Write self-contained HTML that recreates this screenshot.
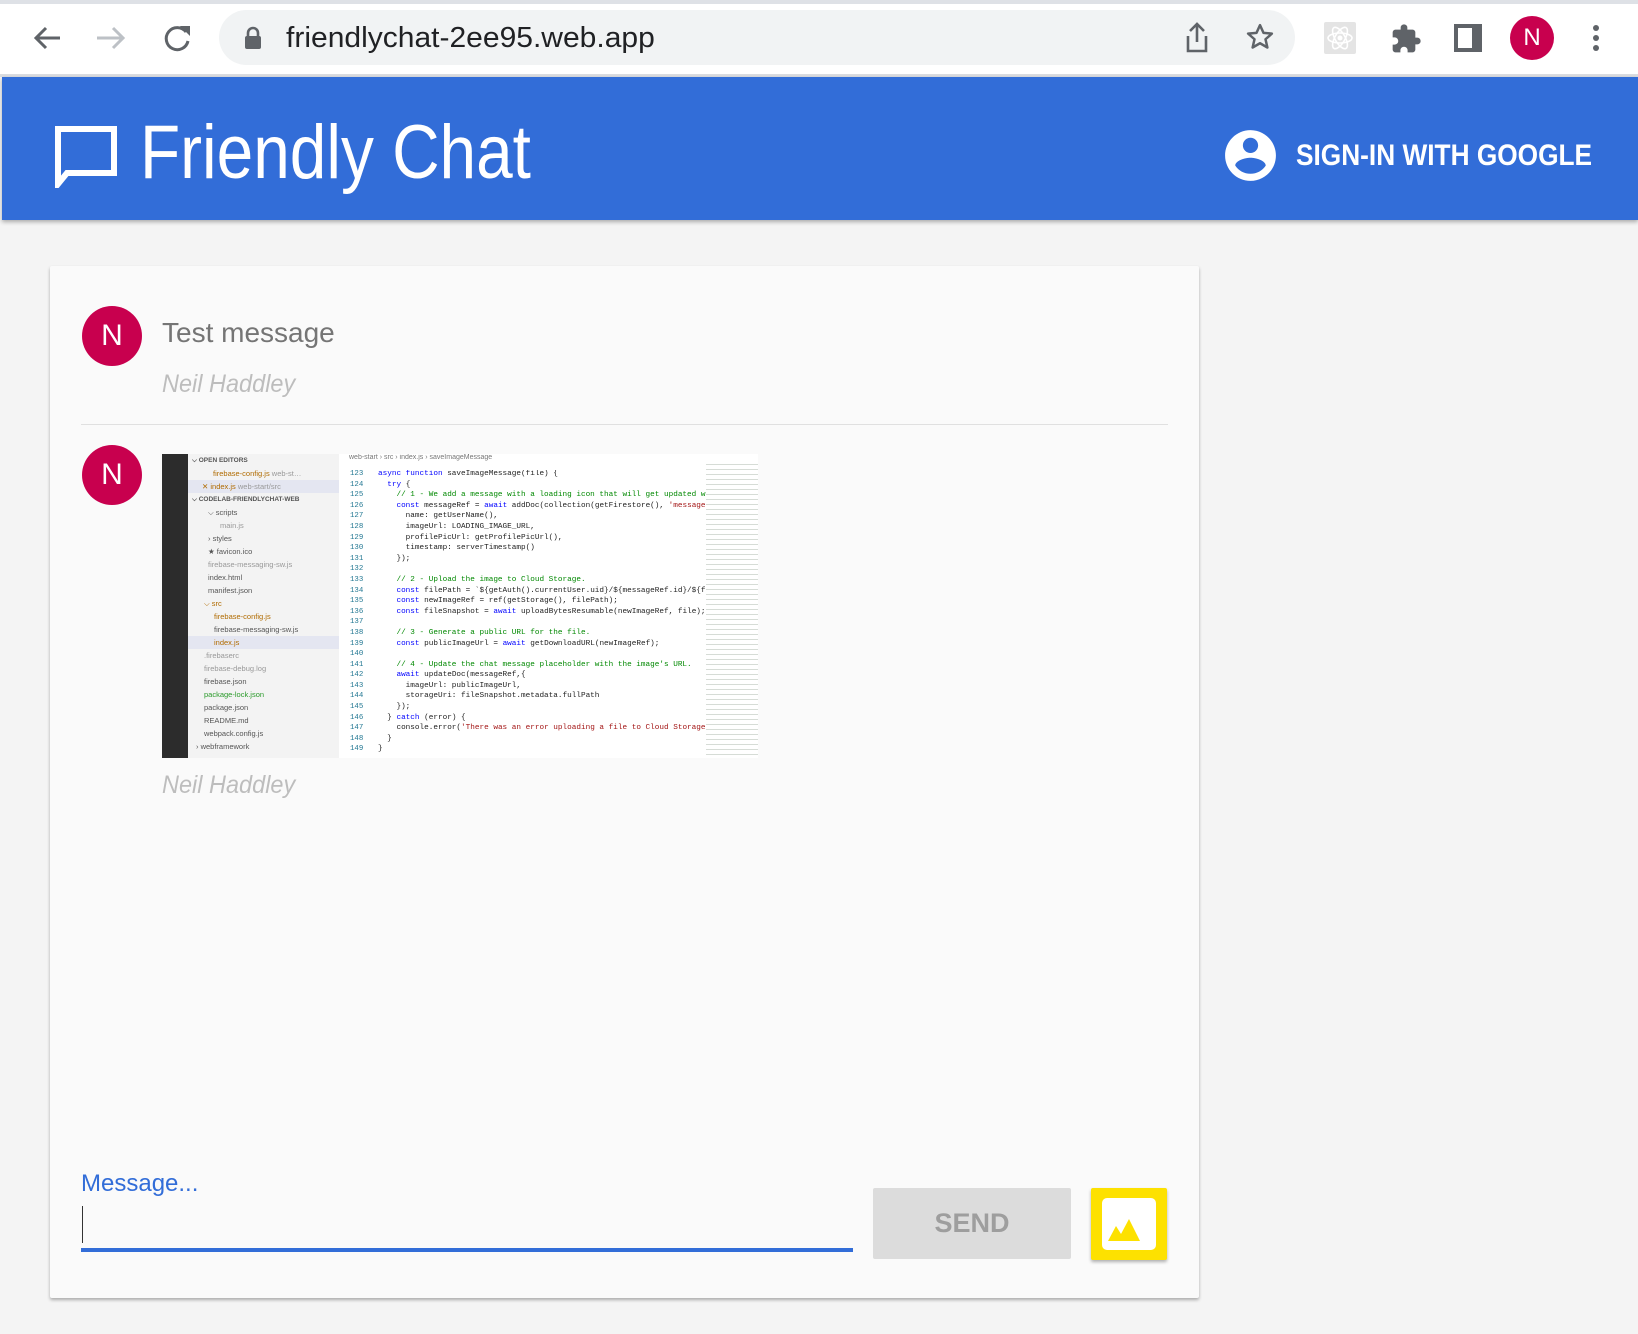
<!DOCTYPE html>
<html><head><meta charset="utf-8">
<style>
*{margin:0;padding:0;box-sizing:border-box}
body{width:1638px;height:1334px;background:#f4f4f4;font-family:"Liberation Sans",sans-serif;position:relative;overflow:hidden}
.abs{position:absolute}
.mono{font-family:"Liberation Mono",monospace}
</style></head><body>
<!-- browser chrome -->
<div class="abs" style="left:0;top:0;width:1638px;height:4px;background:#dee1e6"></div>
<div class="abs" style="left:0;top:4px;width:1638px;height:70px;background:#fff"></div>
<div class="abs" style="left:0;top:74px;width:1638px;height:3px;background:#dadce0"></div>
<svg class="abs" style="left:30px;top:22px" width="170" height="32" viewBox="0 0 170 32">
 <path d="M30 16H6M16 6L6 16l10 10" stroke="#5f6368" stroke-width="3" fill="none"/>
 <path d="M67 16h26M83 6l10 10-10 10" stroke="#bdc1c6" stroke-width="3" fill="none"/>
 <path d="M156 10a11 11 0 1 0 2 9" stroke="#5f6368" stroke-width="3" fill="none"/>
 <path d="M150 4h10v10z" fill="#5f6368"/>
</svg>
<div class="abs" style="left:219px;top:10px;width:1076px;height:55px;border-radius:28px;background:#f1f3f4"></div>
<svg class="abs" style="left:244px;top:26px" width="18" height="24" viewBox="0 0 18 24"><path d="M4 11V7a5 5 0 0 1 10 0v4" stroke="#5f6368" stroke-width="2.6" fill="none"/><rect x="1" y="10" width="16" height="13" rx="2" fill="#5f6368"/></svg>
<div class="abs" style="left:286px;top:22px;font-size:29px;color:#202124;transform:scaleX(1.035);transform-origin:0 0">friendlychat-2ee95.web.app</div>
<svg class="abs" style="left:1184px;top:22px" width="26" height="32" viewBox="0 0 26 32"><path d="M13 20V3M6 9l7-7 7 7M4 14v15h18V14" stroke="#5f6368" stroke-width="2.6" fill="none"/></svg>
<svg class="abs" style="left:1245px;top:22px" width="30" height="30" viewBox="0 0 24 24"><path d="M12 2.5l2.8 6.2 6.7.6-5.1 4.5 1.5 6.6L12 17l-5.9 3.4 1.5-6.6-5.1-4.5 6.7-.6z" stroke="#5f6368" stroke-width="2" fill="none" stroke-linejoin="round"/></svg>
<div class="abs" style="left:1324px;top:22px;width:32px;height:32px;background:#e4e4e4;border-radius:2px"></div>
<svg class="abs" style="left:1324px;top:22px" width="32" height="32" viewBox="0 0 32 32"><g stroke="#fff" stroke-width="1.6" fill="none"><ellipse cx="16" cy="16" rx="12" ry="5"/><ellipse cx="16" cy="16" rx="12" ry="5" transform="rotate(60 16 16)"/><ellipse cx="16" cy="16" rx="12" ry="5" transform="rotate(-60 16 16)"/></g><circle cx="16" cy="16" r="2.5" fill="#fff"/></svg>
<svg class="abs" style="left:1390px;top:23px" width="32" height="32" viewBox="0 0 24 24"><path d="M20.5 11H19V7a2 2 0 0 0-2-2h-4V3.5a2.5 2.5 0 0 0-5 0V5H4a2 2 0 0 0-2 2v3.8h1.5a2.7 2.7 0 0 1 0 5.4H2V20a2 2 0 0 0 2 2h3.8v-1.5a2.7 2.7 0 0 1 5.4 0V22H17a2 2 0 0 0 2-2v-4h1.5a2.5 2.5 0 0 0 0-5z" fill="#5f6368"/></svg>
<div class="abs" style="left:1454px;top:24px;width:28px;height:28px;border:4px solid #5f6368;border-right-width:10px"></div>
<div class="abs" style="left:1510px;top:16px;width:44px;height:44px;border-radius:50%;background:#c8004e;color:#fff;font-size:24px;text-align:center;line-height:44px">N</div>
<div class="abs" style="left:1593px;top:25px;width:6px;height:6px;border-radius:50%;background:#5f6368;box-shadow:0 10px 0 #5f6368,0 20px 0 #5f6368"></div>

<!-- header -->
<div class="abs" style="left:2px;top:77px;width:1636px;height:143px;background:#326dd8;box-shadow:0 2px 4px rgba(0,0,0,.3)"></div>
<svg class="abs" style="left:55px;top:126px" width="62" height="62" viewBox="0 0 62 62"><path d="M3 3h56v44H12L3 58z" stroke="#fff" stroke-width="6" fill="none" stroke-linejoin="miter"/></svg>
<div class="abs" style="left:140px;top:109px;font-size:76px;color:#fff;transform:scaleX(0.865);transform-origin:0 0">Friendly Chat</div>
<svg class="abs" style="left:1220px;top:125px" width="61" height="61" viewBox="0 0 24 24"><path fill="#fff" d="M12 2C6.48 2 2 6.48 2 12s4.48 10 10 10 10-4.48 10-10S17.52 2 12 2zm0 3c1.66 0 3 1.34 3 3s-1.34 3-3 3-3-1.34-3-3 1.34-3 3-3zm0 14.2c-2.5 0-4.71-1.28-6-3.22.03-1.99 4-3.08 6-3.08 1.99 0 5.97 1.09 6 3.08-1.29 1.94-3.5 3.22-6 3.22z"/></svg>
<div class="abs" style="left:1296px;top:139px;font-size:30px;color:#fff;font-weight:bold;transform:scaleX(0.875);transform-origin:0 0">SIGN-IN WITH GOOGLE</div>

<!-- card -->
<div class="abs" style="left:50px;top:266px;width:1149px;height:1032px;background:#fafafa;border-radius:2px;box-shadow:0 2px 3px rgba(0,0,0,.3)"></div>
<div class="abs" style="left:82px;top:306px;width:60px;height:60px;border-radius:50%;background:#c8004e;color:#fff;font-size:30px;text-align:center;line-height:60px">N</div>
<div class="abs" style="left:162px;top:317px;font-size:28px;color:#757575">Test message</div>
<div class="abs" style="left:162px;top:370px;font-size:25px;color:#bdbdbd;font-style:italic;transform:scaleX(0.94);transform-origin:0 0">Neil Haddley</div>
<div class="abs" style="left:81px;top:424px;width:1087px;height:1px;background:#e0e0e0"></div>
<div class="abs" style="left:82px;top:445px;width:60px;height:60px;border-radius:50%;background:#c8004e;color:#fff;font-size:30px;text-align:center;line-height:60px">N</div>

<!-- screenshot image -->
<div class="abs" style="left:162px;top:454px;width:596px;height:304px;background:#fff;overflow:hidden">
 <div class="abs" style="left:0;top:0;width:26px;height:304px;background:#2c2c2c"></div>
 <div class="abs" style="left:26px;top:0;width:151px;height:304px;background:#f3f3f3;font-size:7.5px;color:#555;line-height:13px">
  <div style="padding-left:4px;font-weight:bold;font-size:6.5px">⌵ OPEN EDITORS</div>
  <div style="padding-left:25px;color:#b06b00">firebase-config.js <span style="color:#999">web-st…</span></div>
  <div style="padding-left:14px;background:#e4e6f1;color:#b06b00">✕ index.js <span style="color:#999">web-start/src</span></div>
  <div style="padding-left:4px;font-weight:bold;font-size:6.5px">⌵ CODELAB-FRIENDLYCHAT-WEB</div>
  <div style="padding-left:20px">⌵ scripts</div>
  <div style="padding-left:32px;color:#999">main.js</div>
  <div style="padding-left:20px">› styles</div>
  <div style="padding-left:20px">★ favicon.ico</div>
  <div style="padding-left:20px;color:#999">firebase-messaging-sw.js</div>
  <div style="padding-left:20px">index.html</div>
  <div style="padding-left:20px">manifest.json</div>
  <div style="padding-left:16px;color:#b06b00">⌵ src</div>
  <div style="padding-left:26px;color:#b06b00">firebase-config.js</div>
  <div style="padding-left:26px">firebase-messaging-sw.js</div>
  <div style="padding-left:26px;background:#e4e6f1;color:#b06b00">index.js</div>
  <div style="padding-left:16px;color:#999">.firebaserc</div>
  <div style="padding-left:16px;color:#999">firebase-debug.log</div>
  <div style="padding-left:16px">firebase.json</div>
  <div style="padding-left:16px;color:#2a9a2a">package-lock.json</div>
  <div style="padding-left:16px">package.json</div>
  <div style="padding-left:16px">README.md</div>
  <div style="padding-left:16px">webpack.config.js</div>
  <div style="padding-left:8px">› webframework</div>
 </div>
 <div class="abs" style="left:187px;top:0;font-size:7px;color:#777">web-start › src › index.js › saveImageMessage</div>
 <div class="abs mono" style="left:188px;top:15px;font-size:7.4px;line-height:10.6px;color:#237893;white-space:pre">123
124
125
126
127
128
129
130
131
132
133
134
135
136
137
138
139
140
141
142
143
144
145
146
147
148
149</div>
 <div class="abs mono" style="left:216px;top:15px;font-size:7.4px;line-height:10.6px;color:#222;white-space:pre;transform:scaleX(1.04);transform-origin:0 0"><span style="color:#00f">async function</span> saveImageMessage(file) {
  <span style="color:#00f">try</span> {
    <span style="color:#080">// 1 - We add a message with a loading icon that will get updated with th</span>
    <span style="color:#00f">const</span> messageRef = <span style="color:#00f">await</span> addDoc(collection(getFirestore(), <span style="color:#a31515">'messages'</span>), {
      name: getUserName(),
      imageUrl: LOADING_IMAGE_URL,
      profilePicUrl: getProfilePicUrl(),
      timestamp: serverTimestamp()
    });

    <span style="color:#080">// 2 - Upload the image to Cloud Storage.</span>
    <span style="color:#00f">const</span> filePath = `${getAuth().currentUser.uid}/${messageRef.id}/${file.na
    <span style="color:#00f">const</span> newImageRef = ref(getStorage(), filePath);
    <span style="color:#00f">const</span> fileSnapshot = <span style="color:#00f">await</span> uploadBytesResumable(newImageRef, file);

    <span style="color:#080">// 3 - Generate a public URL for the file.</span>
    <span style="color:#00f">const</span> publicImageUrl = <span style="color:#00f">await</span> getDownloadURL(newImageRef);

    <span style="color:#080">// 4 - Update the chat message placeholder with the image's URL.</span>
    <span style="color:#00f">await</span> updateDoc(messageRef,{
      imageUrl: publicImageUrl,
      storageUri: fileSnapshot.metadata.fullPath
    });
  } <span style="color:#00f">catch</span> (error) {
    console.error(<span style="color:#a31515">'There was an error uploading a file to Cloud Storage:'</span>, er
  }
}</div>
 <div class="abs" style="left:544px;top:8px;width:52px;height:296px;background:repeating-linear-gradient(#fff 0 2px,#d6dcd6 2px 3px,#fff 3px 5px)"></div>
</div>
<div class="abs" style="left:162px;top:771px;font-size:25px;color:#bdbdbd;font-style:italic;transform:scaleX(0.94);transform-origin:0 0">Neil Haddley</div>

<!-- input -->
<div class="abs" style="left:81px;top:1170px;font-size:24px;color:#326dd8">Message...</div>
<div class="abs" style="left:82px;top:1206px;width:1px;height:37px;background:#333"></div>
<div class="abs" style="left:81px;top:1248px;width:772px;height:4px;background:#326dd8"></div>
<div class="abs" style="left:873px;top:1188px;width:198px;height:71px;background:#dcdcdc;border-radius:2px;color:#9e9e9e;font-weight:bold;font-size:27px;text-align:center;line-height:71px">SEND</div>
<div class="abs" style="left:1091px;top:1188px;width:76px;height:72px;background:#fde100;border-radius:2px;box-shadow:0 2px 3px rgba(0,0,0,.3)"></div>
<div class="abs" style="left:1102px;top:1198px;width:54px;height:52px;background:#fff;border-radius:5px"></div>
<svg class="abs" style="left:1102px;top:1198px" width="54" height="52" viewBox="0 0 54 52"><path d="M6 43l8-15 5 8 8-15 11 22z" fill="#fde100"/></svg>
</body></html>
